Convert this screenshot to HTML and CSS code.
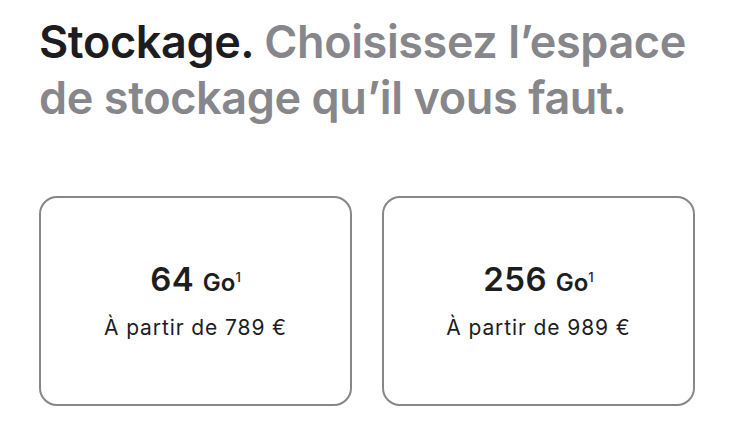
FILE: index.html
```html
<!DOCTYPE html>
<html lang="fr">
<head>
<meta charset="utf-8">
<link rel="stylesheet" href="styles.css">
</head>
<body>
<main class="page">
  <h1 class="title"><span class="title-strong">Stockage.</span> Choisissez l’espace de stockage qu’il vous faut.</h1>
  <div class="options">
    <div class="card">
      <div class="size">64 <span class="unit">Go<sup>1</sup></span></div>
      <div class="price">À partir de 789 €</div>
    </div>
    <div class="card">
      <div class="size">256 <span class="unit">Go<sup>1</sup></span></div>
      <div class="price">À partir de 989 €</div>
    </div>
  </div>
</main>
</body>
</html>
```
FILE: styles.css
```css
html, body {
  margin: 0;
  padding: 0;
  background: #fff;
}
.page {
  padding: 14px 30px 0 39px;
  font-family: Inter, "Noto Sans", sans-serif;
  -webkit-font-smoothing: antialiased;
}
.title {
  margin: 0;
  font-size: 45px;
  line-height: 56px;
  font-weight: 600;
  letter-spacing: -0.4px;
  color: #86868b;
  width: 660px;
}
.title-strong {
  color: #1d1d1f;
}
.options {
  display: grid;
  grid-template-columns: 313px 313px;
  gap: 30px;
  margin-top: 70px;
}
.card {
  height: 210px;
  box-sizing: border-box;
  border: 2px solid #86868b;
  border-radius: 18px;
  display: flex;
  flex-direction: column;
  align-items: center;
  justify-content: center;
  color: #1d1d1f;
}
.size {
  font-size: 33px;
  font-weight: 600;
  line-height: 36px;
  letter-spacing: 0.4px;
}
.unit {
  font-size: 24px;
  letter-spacing: 0;
}
.unit sup {
  font-size: 13px;
  vertical-align: 9px;
  line-height: 0;
  font-weight: 500;
}
.price {
  margin-top: 14px;
  font-size: 21px;
  line-height: 26px;
  font-weight: 400;
  letter-spacing: 0.9px;
}
```
